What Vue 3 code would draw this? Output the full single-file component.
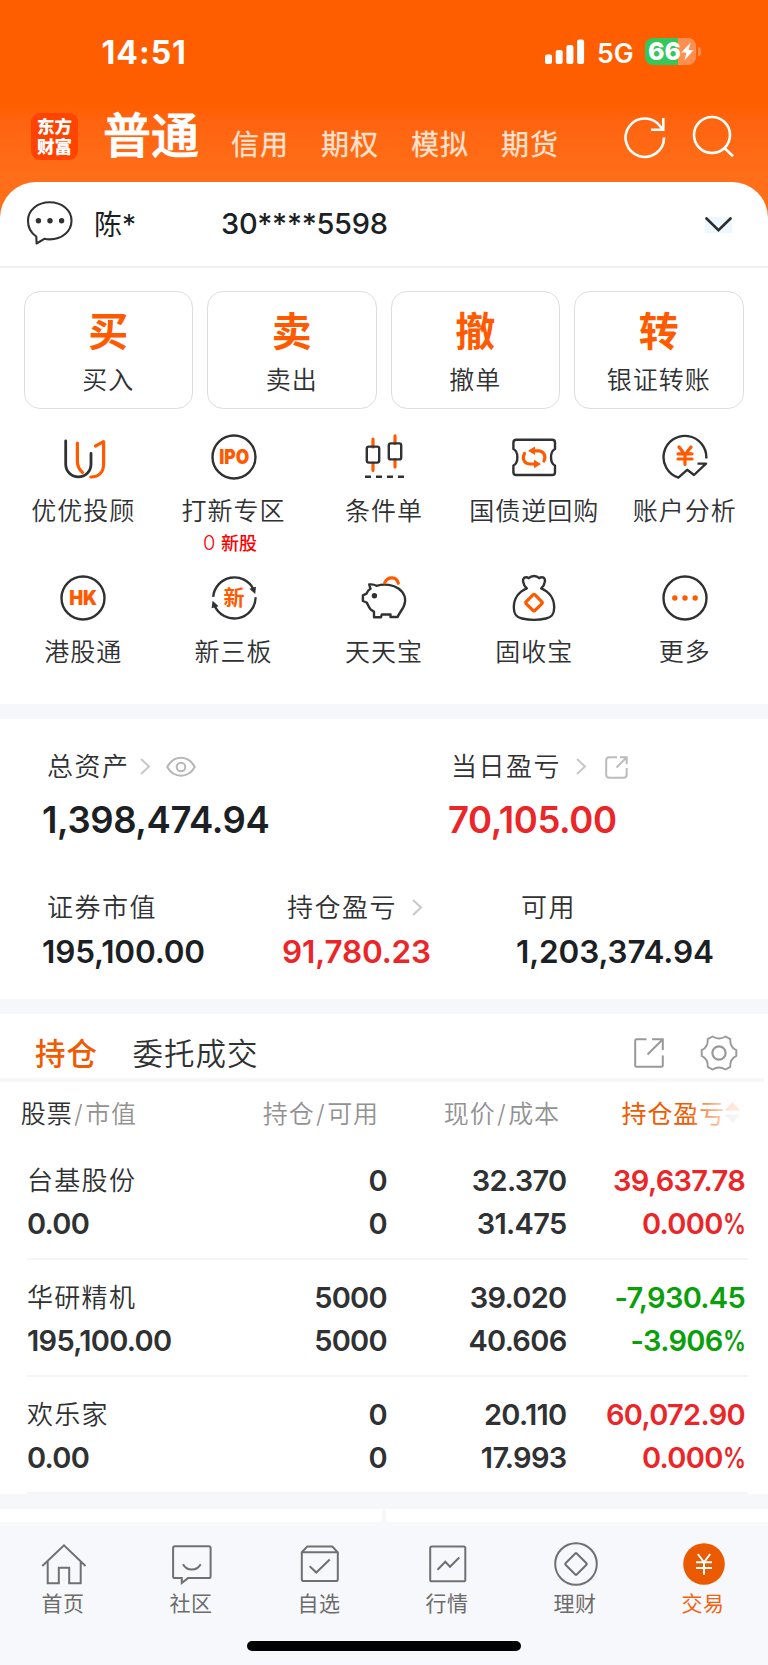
<script setup>
import { ref } from 'vue';

const accountTabs = ['信用', '期权', '模拟', '期货'];

const actions = [
  { mark: '买', label: '买入' },
  { mark: '卖', label: '卖出' },
  { mark: '撤', label: '撤单' },
  { mark: '转', label: '银证转账' },
];

const shortcuts = [
  { icon: 'advisor', label: '优优投顾' },
  { icon: 'ipo', label: '打新专区', count: '0', note: '新股' },
  { icon: 'candles', label: '条件单' },
  { icon: 'ticket', label: '国债逆回购' },
  { icon: 'analysis', label: '账户分析' },
  { icon: 'hk', label: '港股通' },
  { icon: 'xin', label: '新三板' },
  { icon: 'pig', label: '天天宝' },
  { icon: 'bag', label: '固收宝' },
  { icon: 'more', label: '更多' },
];

const holdings = [
  { name: '台基股份', value: '0.00', hold: '0', free: '0', price: '32.370', cost: '31.475', profit: '39,637.78', rate: '0.000', trend: 'up' },
  { name: '华研精机', value: '195,100.00', hold: '5000', free: '5000', price: '39.020', cost: '40.606', profit: '-7,930.45', rate: '-3.906', trend: 'down' },
  { name: '欢乐家', value: '0.00', hold: '0', free: '0', price: '20.110', cost: '17.993', profit: '60,072.90', rate: '0.000', trend: 'up' },
];

const navItems = [
  { icon: 'home', label: '首页' },
  { icon: 'community', label: '社区' },
  { icon: 'watch', label: '自选' },
  { icon: 'market', label: '行情' },
  { icon: 'wealth', label: '理财' },
  { icon: 'trade', label: '交易' },
];

const activeNav = ref('trade');
</script>

<template>
  <main class="app">
    <header class="hero">
      <div class="status">
        <span class="time">14:51</span>
        <div class="status-right">
          <svg class="signal" width="40" height="26" viewBox="0 0 40 26" fill="#fff">
            <rect x="0" y="15.5" width="7" height="9.5" rx="2" />
            <rect x="10.7" y="11" width="7" height="14" rx="2" />
            <rect x="21.4" y="6" width="7" height="19" rx="2" />
            <rect x="32.1" y="0.5" width="7" height="24.5" rx="2" />
          </svg>
          <span class="network">5G</span>
          <div class="battery">
            <span>66</span>
            <svg width="13" height="19" viewBox="0 0 13 19" fill="#fff">
              <path d="M9.6 0.5 0.4 10.6H5.4L3.4 18.6 12.6 8H7.6Z" />
            </svg>
          </div>
          <i class="battery-tip"></i>
        </div>
      </div>
      <nav class="top-nav">
        <div class="logo"><span>东方</span><span>财富</span></div>
        <strong>普通</strong>
        <div class="top-tabs">
          <span v-for="tab in accountTabs" :key="tab">{{ tab }}</span>
        </div>
        <svg class="refresh" width="44" height="44" viewBox="0 0 44 44" fill="none" stroke="#fff" stroke-width="2.6">
          <path d="M41 22.5A19.2 19.2 0 1 1 37.4 11.5L40 15" />
          <path d="M40.3 3V14.8H28" />
        </svg>
        <svg class="search" width="44" height="44" viewBox="0 0 44 44" fill="none" stroke="#fff" stroke-width="2.6">
          <circle cx="20" cy="20" r="18" />
          <path d="M32.5 33 41 41.3" />
        </svg>
      </nav>
    </header>

    <section class="account">
      <svg width="48" height="48" viewBox="0 0 48 48" fill="none" stroke="#303133" stroke-width="2.1">
        <path d="M11.3 36.5A19.4 19 0 0 1 3 20.7C3 10.2 12.5 2.3 24.7 2.3S46.5 10.2 46.5 20.7 37 39.4 24.7 39.4C22.8 39.4 21 39.2 19.3 38.8L11.6 43.5Z" stroke-linejoin="round" />
        <g fill="#303133" stroke="none">
          <circle cx="13.4" cy="20.7" r="2.7" /><circle cx="25" cy="20.7" r="2.7" /><circle cx="36.6" cy="20.7" r="2.7" />
        </g>
      </svg>
      <span class="holder">陈*</span>
      <span class="number">30****5598</span>
      <svg class="chevron" width="27" height="16" viewBox="0 0 27 16" fill="none" stroke="#2b2c2e" stroke-width="2.6">
        <path d="M1.5 1.5 13.5 13.3 25.5 1.5" stroke-linecap="round" />
      </svg>
    </section>

    <section class="actions">
      <button v-for="item in actions" :key="item.mark" type="button">
        <strong>{{ item.mark }}</strong>
        <span>{{ item.label }}</span>
      </button>
    </section>

    <section class="shortcuts">
      <div v-for="item in shortcuts" :key="item.icon" class="shortcut">
        <svg width="48" height="48" viewBox="0 0 48 48" class="line-icon">
          <template v-if="item.icon === 'advisor'">
            <path d="M6.7 8V31.3A12.6 12.6 0 0 0 32 31.3V20.5" stroke-width="2.8" stroke-linecap="round" />
            <path class="hot" d="M18.4 10V28C18.4 33 20 36.5 23.5 39.5M36.5 13 44.6 8.7V31C44.6 39 40 44 31.8 44" />
          </template>
          <template v-else-if="item.icon === 'ipo'">
            <circle cx="24" cy="24" r="21.5" />
            <text x="24.3" y="31.3" textLength="30" lengthAdjust="spacingAndGlyphs">IPO</text>
          </template>
          <template v-else-if="item.icon === 'candles'">
            <path class="hot" stroke-width="3.2" d="M13 6V14M13 30V37.5M35 2.8V10.5M35 26.5V34" />
            <rect x="6.8" y="13.6" width="12.4" height="16" rx="2" />
            <rect x="28.8" y="10.4" width="12.4" height="16" rx="2" />
            <path d="M5 43.8H44" stroke-width="2.6" stroke-dasharray="6 5" />
          </template>
          <template v-else-if="item.icon === 'ticket'">
            <path d="M6.2 6.7H42.2Q45 6.7 45 9.5V16C39.7 18.5 39.7 30 45 32.5V39.2Q45 42 42.2 42H6.2Q3.4 42 3.4 39.2V32.5C8.7 30 8.7 18.5 3.4 16V9.5Q3.4 6.7 6.2 6.7Z" />
            <path class="hot" d="M14.5 20.5C11.5 26.5 15 31 20 31H25M34 28C36.5 22 33 18 28.5 17.8H24" />
            <path class="solid" d="M25 13.5V22L18 17.8ZM24 26.8V35.2L31 31Z" />
          </template>
          <template v-else-if="item.icon === 'analysis'">
            <path d="M45.3 25.5A21.4 21.4 0 1 0 17.3 44.6L26.2 36.8 33 42 45 30.6H36.5" />
            <path class="hot" d="M18 14 24 21.7 30 14M17 20.8H31M17 26H31M24 21V31.5" />
          </template>
          <template v-else-if="item.icon === 'hk'">
            <circle cx="24" cy="24" r="21.5" />
            <text x="24.2" y="31.3" textLength="28" lengthAdjust="spacingAndGlyphs">HK</text>
          </template>
          <template v-else-if="item.icon === 'xin'">
            <path d="M3.2 22.8A21.3 21.3 0 0 1 43.5 15.2M45.6 23.3A21.4 21.4 0 0 1 4.5 31.5" />
            <path fill="#303133" stroke="none" d="M46 12.8 45.2 20 39.4 14.8ZM1.6 34.2 2.6 26.8 8.6 32.2Z" />
            <text class="cn" x="24" y="31">新</text>
          </template>
          <template v-else-if="item.icon === 'pig'">
            <path d="M9.2 10.5Q13.5 10 16.5 11.8C25 9.3 33.5 11 38.5 14.5 44 18.5 47.2 25 43.7 32.5 42 36 39.5 38.5 37.6 43H30.5V40.5H21.8L21 43.2H14V37.8L10.7 35.5C8.5 33 8 30.5 6.7 28.5L2.9 27V21.3L6.5 19.7C7.2 17.5 8.5 16 10.5 14.8Z" />
            <circle cx="14.4" cy="21.7" r="2.7" fill="#303133" stroke="none" />
            <path class="hot" d="M24.7 8.6C28 2 36.5 2.3 38.3 9.2" />
          </template>
          <template v-else-if="item.icon === 'bag'">
            <path d="M16.8 14.3C12.5 10.5 11.5 3.5 15.8 3.3 17 3.2 18 3.6 18.7 4.2 21.5 1.2 26.5 1.2 29.3 4.2 30 3.6 31 3.2 32.2 3.3 36.5 3.5 35.5 10.5 31.2 14.3 39 17.5 44.2 24.5 44.2 33.5 44.2 40.5 41.5 43.2 36 44.5 28.5 46.2 19.5 46.2 12 44.5 6.5 43.2 3.8 40.5 3.8 33.5 3.8 24.5 9 17.5 16.8 14.3Z" />
            <rect class="hot" x="17.8" y="22.5" width="12.4" height="12.4" rx="1.5" transform="rotate(45 24 28.7)" />
          </template>
          <template v-else>
            <circle cx="24" cy="24" r="21.5" />
            <g class="solid"><circle cx="13.8" cy="24" r="2.7" /><circle cx="24" cy="24" r="2.7" /><circle cx="34.2" cy="24" r="2.7" /></g>
          </template>
        </svg>
        <span class="shortcut-label">{{ item.label }}</span>
        <span v-if="item.note" class="shortcut-note">{{ item.count }} <b>{{ item.note }}</b></span>
      </div>
    </section>

    <section class="assets">
      <div class="asset-row main-row">
        <div class="asset total">
          <div class="asset-label">
            总资产
            <svg class="arrow" width="11" height="17" viewBox="0 0 11 17"><path d="M1 1 9 8.5 1 16" /></svg>
            <svg class="eye" width="30" height="22" viewBox="0 0 30 22" fill="none" stroke="#b6b6b6" stroke-width="2">
              <path d="M1.2 11C8-1.3 22-1.3 28.8 11 22 22.6 8 22.6 1.2 11Z" /><circle cx="15" cy="11" r="4.3" />
            </svg>
          </div>
          <strong>1,398,474.94</strong>
        </div>
        <div class="asset today">
          <div class="asset-label">
            当日盈亏
            <svg class="arrow wide" width="11" height="17" viewBox="0 0 11 17"><path d="M1 1 9 8.5 1 16" /></svg>
            <svg class="share" width="23" height="23" viewBox="0 0 23 23" fill="none" stroke="#bcbcbc" stroke-width="2">
              <path d="M12 1.2H4.2Q1.2 1.2 1.2 4.2V18.5Q1.2 21.7 4.2 21.7H18.5Q21.7 21.7 21.7 18.5V12M15 1.2H21.7V8M21.5 1.5 11.5 11.5" />
            </svg>
          </div>
          <strong class="up">70,105.00</strong>
        </div>
      </div>
      <div class="asset-row sub-row">
        <div class="asset market-value">
          <div class="asset-label">证券市值</div>
          <strong>195,100.00</strong>
        </div>
        <div class="asset position">
          <div class="asset-label">
            持仓盈亏
            <svg class="arrow wide" width="11" height="17" viewBox="0 0 11 17"><path d="M1 1 9 8.5 1 16" /></svg>
          </div>
          <strong class="up">91,780.23</strong>
        </div>
        <div class="asset">
          <div class="asset-label">可用</div>
          <strong>1,203,374.94</strong>
        </div>
      </div>
    </section>

    <section class="holdings">
      <div class="holding-tabs">
        <strong>持仓</strong>
        <span>委托成交</span>
        <svg class="open" width="30" height="30" viewBox="0 0 30 30" fill="none" stroke="#999" stroke-width="2">
          <path d="M12.5 1.3H2.5Q1.2 1.3 1.2 2.6V27.5Q1.2 28.8 2.5 28.8H27.5Q28.8 28.8 28.8 27.5V17.5M18 1.3H28.8V12M28.6 1.5 13.5 16.5" />
        </svg>
        <svg width="38" height="36" viewBox="0 0 38 36" fill="none" stroke="#999" stroke-width="1.9" stroke-linejoin="round">
          <path d="M12.5 1.5Q19 5.5 25.5 1.5L30.3 4.2Q29.7 12 36.3 15.2V20.8Q29.7 24 30.3 31.8L25.5 34.5Q19 30.5 12.5 34.5L7.7 31.8Q8.3 24 1.7 20.8V15.2Q8.3 12 7.7 4.2Z" />
          <circle cx="19" cy="18" r="6.6" stroke-width="2.2" />
        </svg>
      </div>

      <div class="table-head">
        <span><b>股票</b><i>/</i>市值</span>
        <span>持仓<i>/</i>可用</span>
        <span>现价<i>/</i>成本</span>
        <span class="sorted">
          持仓盈亏
          <svg width="15" height="21" viewBox="0 0 15 21"><path d="M7.5 0 15 8.5H0Z" fill="#ff5a00" /><path d="M0 12.5H15L7.5 21Z" fill="#bbb" /></svg>
        </span>
      </div>

      <div v-for="row in holdings" :key="row.name" class="holding">
        <div class="col"><span class="name">{{ row.name }}</span><span>{{ row.value }}</span></div>
        <div class="col"><span>{{ row.hold }}</span><span>{{ row.free }}</span></div>
        <div class="col"><span>{{ row.price }}</span><span>{{ row.cost }}</span></div>
        <div class="col" :class="row.trend">
          <span>{{ row.profit }}</span>
          <span>{{ row.rate }}<span class="pct">%</span></span>
        </div>
      </div>
    </section>

    <div class="peek"><i></i><i></i></div>

    <footer class="bottom">
      <nav class="bottom-nav">
        <div v-for="item in navItems" :key="item.icon" class="nav-item" :class="{ active: activeNav === item.icon }" @click="activeNav = item.icon">
          <svg width="48" height="48" viewBox="0 0 48 48" fill="none" stroke="#707070" stroke-width="2">
            <path v-if="item.icon === 'home'" d="M2.3 26 24 5.3 45.5 26M7.7 21.5V43.2H18.8V27.7H29.2V43.2H40.7V21.5" />
            <path v-else-if="item.icon === 'community'" d="M7 6.3H40.7Q42.6 6.3 42.6 8.2V36.2Q42.6 38.1 40.7 38.1H20L13.8 43V38.1H7Q5.1 38.1 5.1 36.2V8.2Q5.1 6.3 7 6.3ZM15 24.2C19 31.3 28.7 31.3 32.7 24.2" />
            <path v-else-if="item.icon === 'watch'" d="M5.8 12.3 11.3 6.5H36.3L41.8 12.3V39.2Q41.8 41 40 41H7.6Q5.8 41 5.8 39.2ZM5.8 12.3H41.8M13.7 26.3 20.3 32.5 33.7 19.5" />
            <path v-else-if="item.icon === 'market'" d="M7.8 6.5H39.7Q41.3 6.5 41.3 8.1V39.7Q41.3 41.3 39.7 41.3H7.8Q6.2 41.3 6.2 39.7V8.1Q6.2 6.5 7.8 6.5ZM13.5 29.8 21.3 21.8 26 26.7 35.3 17.5" />
            <template v-else-if="item.icon === 'wealth'">
              <circle cx="24" cy="24" r="20.8" />
              <rect x="16.1" y="16.1" width="15.8" height="15.8" rx="1" transform="rotate(45 24 24)" />
            </template>
            <template v-else>
              <circle cx="24" cy="24" r="20.8" fill="#eb5a00" stroke="none" />
              <path d="M17.8 14 24 22.3 30.2 14M16 22.3H32M16 28H32M24 22V34.8" stroke="#fff" />
            </template>
          </svg>
          <span>{{ item.label }}</span>
        </div>
      </nav>
      <div class="home-bar"></div>
    </footer>
  </main>
</template>

<style>
body {
  margin: 0;
  background: #fff;
}
</style>

<style scoped>
.app {
  width: 768px;
  height: 1665px;
  overflow: hidden;
  background: #fff;
  color: #303133;
  font-family: Inter, "Noto Sans CJK SC", sans-serif;
}

.hero {
  height: 222px;
  margin-bottom: -40px;
  background: linear-gradient(180deg, #ff5e00 0, #ff5e00 105px, #ff6410 122px, #ff6f19 182px);
}

.status {
  height: 107px;
  display: flex;
  justify-content: space-between;
  align-items: flex-start;
  color: #fff;
}

.time {
  margin: 33px 0 0 101.5px;
  font-size: 32px;
  line-height: 40px;
  letter-spacing: 1px;
  font-weight: 700;
}

.status-right {
  display: flex;
  align-items: center;
  margin: 38px 67px 0 0;
  height: 27px;
}

.network {
  margin: 3px 0 0 12px;
  width: 48px;
  font-size: 26.5px;
  line-height: 27px;
  font-weight: 600;
}

.battery {
  width: 48px;
  height: 27px;
  padding-left: 3px;
  border-radius: 8px;
  background: linear-gradient(90deg, #34c759 0 33.5px, #ff8f50 33.5px);
  display: flex;
  align-items: center;
}

.battery span {
  width: 33px;
  font-size: 25px;
  line-height: 27px;
  font-weight: 800;
}

.battery-tip {
  width: 3px;
  height: 9px;
  margin-left: 2px;
  border-radius: 0 4px 4px 0;
  background: #ff8f50;
}

.top-nav {
  height: 75px;
  display: flex;
  align-items: flex-start;
  color: #fff;
}

.logo {
  width: 47px;
  height: 47px;
  margin: 6px 0 0 31px;
  border-radius: 9px;
  background: #ff4300;
  display: flex;
  flex-direction: column;
  align-items: center;
  justify-content: center;
  font-size: 17.5px;
  line-height: 19.5px;
  font-weight: 900;
}

.top-nav strong {
  width: 126px;
  margin: -3px 0 0 25px;
  font-size: 48px;
  line-height: 64px;
  font-weight: 500;
  -webkit-text-stroke: 0.8px #fff;
}

.top-tabs {
  display: flex;
  gap: 32px;
  margin: 18px 0 0 2px;
  font-size: 28px;
  line-height: 40px;
  letter-spacing: 1px;
  color: #ffe2d0;
  font-weight: 400;
  -webkit-text-stroke: 0.3px #ffe2d0;
}

.refresh {
  margin: 8px 0 0 64px;
}

.search {
  margin: 8px 0 0 25px;
}

.account {
  height: 86px;
  box-sizing: border-box;
  border-radius: 36px 36px 0 0;
  border-bottom: 2px solid #f0f0f1;
  background: #fff;
  display: flex;
  align-items: center;
  padding: 0 36px 0 25px;
  color: #1c1f24;
}

.holder {
  margin: -3px 0 0 21px;
  width: 127px;
  font-size: 28px;
}

.number {
  margin-top: -1px;
  font-size: 29px;
  letter-spacing: -0.3px;
  font-weight: 500;
}

.chevron {
  margin: 2px 0 0 auto;
  background: #eef7ff;
}

.actions {
  display: grid;
  grid-template-columns: repeat(4, 1fr);
  gap: 14px;
  padding: 23px 24.5px 0 23.5px;
}

.actions button {
  height: 118px;
  padding: 12px 0 0;
  border: 1.5px solid #dedede;
  border-radius: 16px;
  background: #fff;
  color: #303133;
  font: inherit;
  display: flex;
  flex-direction: column;
  align-items: center;
}

.actions strong {
  height: 56px;
  font-size: 40px;
  line-height: 56px;
  font-weight: 700;
  color: #ff5a00;
}

.actions span,
.shortcut-label {
  font-size: 25px;
  line-height: 36px;
  letter-spacing: 1px;
  font-weight: 350;
  white-space: nowrap;
}

.actions span {
  margin-top: 2px;
}

.shortcuts {
  height: 295px;
  padding: 24px 8px 0;
  display: grid;
  grid-template-columns: repeat(5, 150.4px);
  grid-auto-rows: 141px;
  box-sizing: border-box;
}

.shortcut {
  display: flex;
  flex-direction: column;
  align-items: center;
}

.shortcut-label {
  margin-top: 12px;
}

.shortcut-note {
  margin: 1px 7px 0 0;
  font-size: 20px;
  line-height: 26px;
  font-weight: 300;
  color: #f00;
}

.shortcut-note b {
  font-size: 18px;
  font-weight: 500;
}

.line-icon {
  fill: none;
  stroke: #303133;
  stroke-width: 2.4;
  stroke-linejoin: round;
}

.line-icon .hot {
  stroke: #ff5a00;
  stroke-width: 3.2;
  stroke-linecap: round;
}

.line-icon .solid {
  fill: #ff5a00;
  stroke: none;
}

.line-icon text {
  fill: #ff5a00;
  stroke: none;
  font-size: 20px;
  font-weight: 900;
  text-anchor: middle;
}

.line-icon .cn {
  font-size: 21px;
  font-weight: 700;
}

.assets {
  height: 280px;
  border-top: 15px solid #f6f7fa;
  border-bottom: 15px solid #f6f7fa;
}

.asset-row {
  display: flex;
  padding-left: 42px;
}

.main-row {
  height: 141px;
  padding-top: 29.5px;
  box-sizing: border-box;
}

.sub-row {
  padding-top: 29.5px;
}

.asset-label {
  padding-left: 5px;
  display: flex;
  align-items: center;
  font-size: 26px;
  line-height: 36px;
  letter-spacing: 1.5px;
  font-weight: 350;
}

.today .asset-label {
  padding-left: 3px;
}

.asset strong {
  display: block;
  color: #1c1f24;
  font-weight: 600;
}

.main-row strong {
  margin-top: 13.5px;
  font-size: 36.5px;
  line-height: 44px;
  letter-spacing: -0.4px;
}

.sub-row strong {
  margin-top: 6.5px;
  font-size: 31.5px;
  line-height: 40px;
  letter-spacing: -0.15px;
}

.total {
  width: 406px;
}

.market-value {
  width: 240px;
}

.position {
  width: 234px;
}

.arrow {
  margin-left: 10px;
  fill: none;
  stroke: #c8c8c8;
  stroke-width: 2;
}

.arrow.wide {
  margin-left: 15px;
}

.eye {
  margin-left: 15px;
}

.share {
  margin: 1px 0 0 18px;
}

.asset strong.up,
.up {
  color: #eb2528;
}

.down {
  color: #09a009;
}

.holding-tabs {
  height: 68px;
  box-sizing: border-box;
  padding: 0 29px 0 35px;
  margin-right: 4px;
  border-bottom: 4px solid #f7f7f7;
  display: flex;
  align-items: center;
  font-size: 30.5px;
  letter-spacing: 1px;
}

.holding-tabs strong {
  width: 97.5px;
  color: #f05a00;
  font-weight: 500;
}

.holding-tabs span {
  font-weight: 350;
}

.holding-tabs svg {
  flex: none;
  margin-top: 14px;
  margin-right: -3px;
}

.holding-tabs strong,
.holding-tabs span {
  margin-top: 12px;
}

.holding-tabs .open {
  margin-left: auto;
  margin-right: 36px;
}

.table-head {
  height: 60px;
  display: grid;
  grid-template-columns: 137px 242px 181px 208px;
  align-items: center;
  font-size: 25px;
  letter-spacing: 0.9px;
  font-weight: 350;
  color: #929292;
  box-sizing: border-box;
}

.table-head span {
  text-align: right;
  white-space: nowrap;
}

.table-head b {
  color: #303133;
  font-weight: 350;
}

.table-head i {
  margin: 0 1.5px;
  font-style: normal;
}

.table-head .sorted {
  position: relative;
  display: flex;
  align-items: center;
  padding-left: 61.5px;
  color: #f05a00;
  font-weight: 400;
}

/* fades the last column out towards the screen edge */
.sorted::after {
  content: "";
  position: absolute;
  inset: 0 20px 0 128px;
  background: linear-gradient(90deg, rgba(255, 255, 255, 0), rgba(255, 255, 255, 0.85) 70%);
}

.holding {
  height: 117px;
  margin: 0 20px 0 27px;
  box-sizing: border-box;
  border-bottom: 2px solid #f5f5f6;
  display: grid;
  grid-template-columns: 180px 180px 179.5px 178.5px;
  font-size: 29px;
  font-weight: 600;
  line-height: 43px;
  letter-spacing: -0.7px;
}

.table-head + .holding {
  margin-top: 1px;
}

.col {
  display: flex;
  flex-direction: column;
  padding-top: 16px;
  text-align: right;
}

.col:first-child {
  text-align: left;
  white-space: nowrap;
}

.name {
  font-size: 26px;
  letter-spacing: 1.3px;
  font-weight: 350;
}

/* narrower percent sign keeps the rate column compact */
.pct {
  display: inline-block;
  margin-left: -6px;
  transform: scaleX(0.79);
  transform-origin: right;
}

.peek {
  height: 28px;
  box-sizing: border-box;
  padding: 15px 0 0;
  background: #f6f7fa;
  display: grid;
  grid-template-columns: 382px 1fr;
  gap: 4px;
}

.peek i {
  background: #fff;
}

.bottom {
  height: 143px;
  background: #f7f8fb;
}

.bottom-nav {
  display: grid;
  grid-template-columns: repeat(6, 1fr);
  padding-top: 18px;
}

.nav-item {
  display: flex;
  flex-direction: column;
  align-items: center;
  color: #6c6c6c;
}

.nav-item span {
  margin: 1px 2px 0 0;
  font-size: 21px;
  line-height: 30px;
  letter-spacing: 0.5px;
}

.nav-item.active {
  color: #f26110;
}

.home-bar {
  width: 274px;
  height: 10px;
  margin: 22px auto 0;
  border-radius: 5px;
  background: #000;
}
</style>
